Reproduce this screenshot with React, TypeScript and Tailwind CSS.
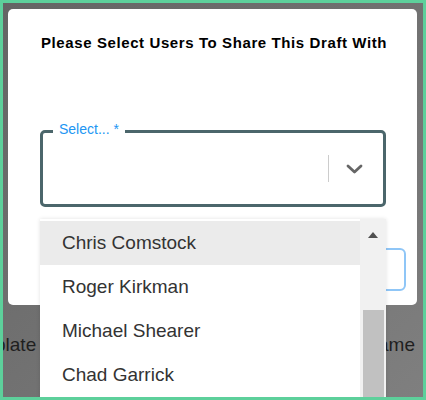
const users = ['Chris Comstock', 'Roger Kirkman', 'Michael Shearer', 'Chad Garrick'];

export default function App() {
    return (
        <div className="w-[426px] h-[400px] border-[3px] border-[#5dd09b] bg-gradient-to-br from-[#646464] to-[#7f7f7f] overflow-hidden relative font-['Liberation_Sans',Arial,sans-serif]">
            {/* Dialog */}
            <div className="relative ml-[5px] mt-[6px] w-[409px] h-[296px] rounded-[5px] bg-white">
                <h2 className="pt-[25px] pl-[33px] text-[15px] font-bold text-black leading-[18px] tracking-[0.6px]">
                    Please Select Users To Share This Draft With
                </h2>

                {/* Select field */}
                <div className="relative mt-[78px] ml-[32px] w-[346px] h-[77px] rounded-[5px] border-[3px] border-[#4b666b] flex items-center justify-end">
                    <span className="absolute -top-[12px] left-[10px] px-[6px] bg-white text-[14px] leading-[16px] text-[#2196f3]">
                        Select... *
                    </span>
                    <div className="w-px h-[27px] bg-[#cccccc]" />
                    <div className="w-[50px] mr-[4px] flex justify-center">
                        <svg width="17" height="10" viewBox="0 0 17 10" fill="none">
                            <path d="M2 2l6.5 6 6.5-6" stroke="#666666" strokeWidth="2.8" strokeLinecap="round" strokeLinejoin="round" />
                        </svg>
                    </div>
                </div>

                {/* Action button behind the menu */}
                <div className="flex justify-end mt-[41px] pr-[11px]">
                    <div className="w-[120px] h-[43px] rounded-[6px] border-2 border-[#8fc6f7]" />
                </div>
            </div>

            {/* Page content under overlay */}
            <div className="flex justify-between mt-[29px] text-[19px] text-[#1f1f1f] leading-[22px]">
                <span className="-ml-[8px]">plate</span>
                <span className="mr-[8px]">Name</span>
            </div>

            {/* Dropdown menu */}
            <div className="absolute left-[37px] top-[216px] w-[346px] h-[190px] flex bg-white shadow-[0_0_4px_rgba(0,0,0,0.12)]">
                <ul className="flex-1 pt-[2px]">
                    {users.map((u, i) => (
                        <li
                            key={u}
                            className={`h-[44px] flex items-center pl-[22px] text-[19px] text-[#333333] ${i === 0 ? 'bg-[#ebebeb]' : 'bg-white'}`}
                        >
                            {u}
                        </li>
                    ))}
                </ul>
                <div className="w-[26px] bg-[#f1f1f1] flex flex-col items-center">
                    <svg className="mt-[13px]" width="10" height="6" viewBox="0 0 10 6">
                        <path d="M0 6L5 0l5 6z" fill="#505050" />
                    </svg>
                    <div className="mt-[72px] w-[21px] flex-1 bg-[#c1c1c1]" />
                </div>
            </div>
        </div>
    );
}
